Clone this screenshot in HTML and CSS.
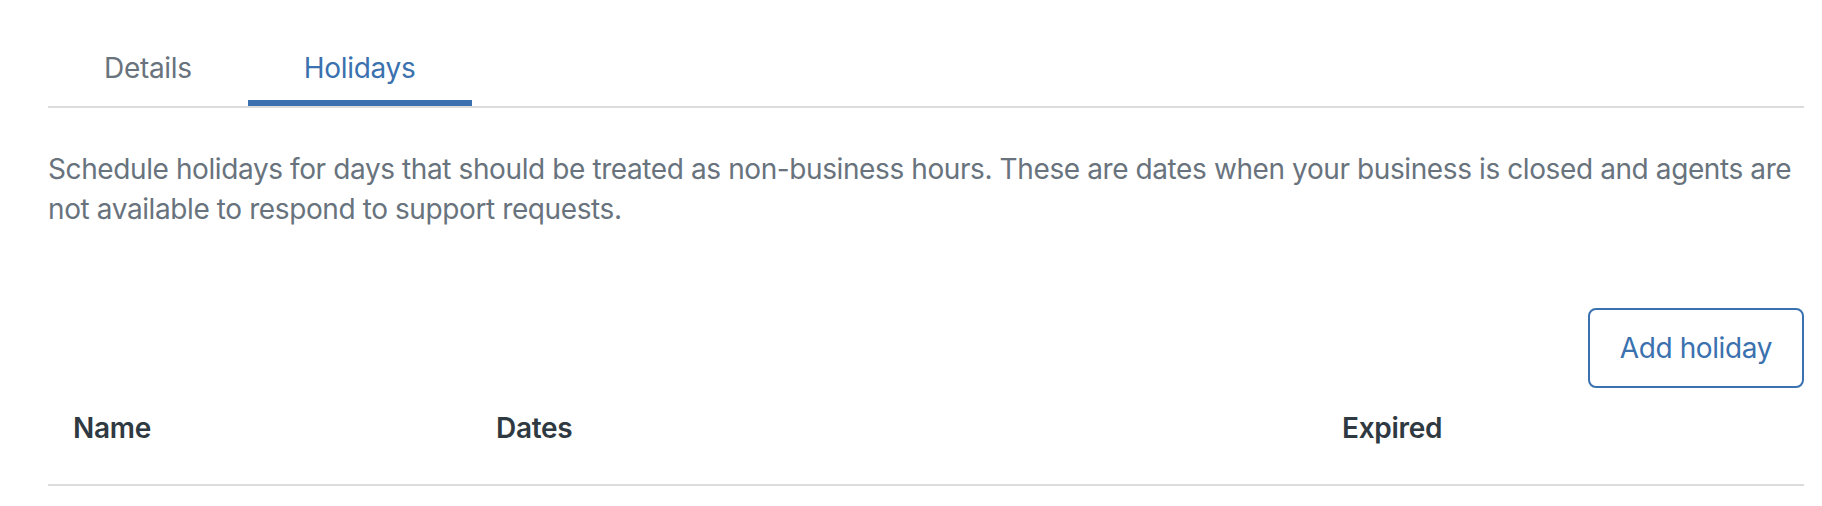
FILE: index.html
```html
<!DOCTYPE html>
<html lang="en">
<head>
<meta charset="utf-8">
<title>Holidays</title>
<link rel="stylesheet" href="styles.css">
</head>
<body>
<div class="page">
  <nav class="tabs">
    <div class="tab">Details</div>
    <div class="tab tab-active">Holidays</div>
  </nav>
  <p class="desc">Schedule holidays for days that should be treated as non-business hours. These are dates when your business is closed and agents are not available to respond to support requests.</p>
  <div class="actions">
    <button class="btn">Add holiday</button>
  </div>
  <div class="table">
    <div class="thead">
      <div class="th">Name</div>
      <div class="th">Dates</div>
      <div class="th">Expired</div>
    </div>
  </div>
</div>
</body>
</html>
```
FILE: styles.css
```css
* { box-sizing: border-box; }
body {
  margin: 0;
  background: #ffffff;
  font-family: Inter, "Noto Sans", sans-serif;
  -webkit-font-smoothing: antialiased;
}
.page {
  padding: 28px 18px 0 48px;
}
.tabs {
  display: flex;
  border-bottom: 2px solid #dcdcdc;
}
.tab {
  padding: 20px 56px 12px;
  font-size: 28px;
  line-height: 40px;
  letter-spacing: -0.3px;
  color: #68737d;
  border-bottom: 6px solid transparent;
}
.tab-active {
  color: #3a71ae;
  border-bottom-color: #3a71ae;
}
.desc {
  margin: 41px 0 0;
  font-size: 28px;
  line-height: 40px;
  letter-spacing: -0.4px;
  color: #68737d;
}
.actions {
  display: flex;
  justify-content: flex-end;
  margin-top: 79px;
}
.btn {
  height: 80px;
  padding: 0 30px;
  border: 2px solid #3a71ae;
  border-radius: 8px;
  background: #fff;
  color: #3a71ae;
  font-family: inherit;
  font-size: 28px;
  line-height: 40px;
  letter-spacing: -0.4px;
}
.thead {
  display: grid;
  grid-template-columns: 423px 846px 1fr;
  border-bottom: 2px solid #dcdcdc;
}
.th {
  padding: 20px 25px 36px;
  font-size: 28px;
  line-height: 40px;
  font-weight: 600;
  letter-spacing: -0.3px;
  color: #2f3941;
}
```
